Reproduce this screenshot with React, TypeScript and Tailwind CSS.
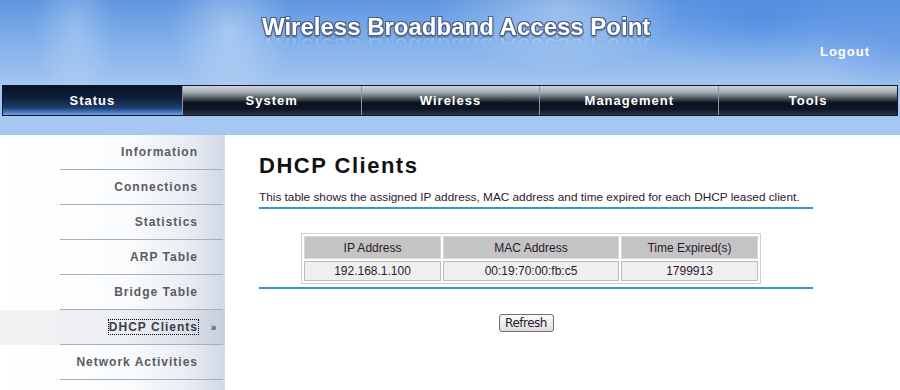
import React from "react";

const navItems = ["Status", "System", "Wireless", "Management", "Tools"];
const sideItems = [
  "Information",
  "Connections",
  "Statistics",
  "ARP Table",
  "Bridge Table",
  "DHCP Clients",
  "Network Activities",
];

export default function App() {
  return (
    <div className="w-[900px] h-[390px] overflow-hidden bg-white font-['Liberation_Sans',Arial,sans-serif]">
      {/* Header */}
      <div className="h-[85px] flex flex-col bg-[radial-gradient(ellipse_40px_80px_at_75px_30px,rgba(255,255,255,0.25),transparent),radial-gradient(ellipse_60px_70px_at_230px_30px,rgba(255,255,255,0.35),transparent),radial-gradient(ellipse_120px_60px_at_560px_10px,rgba(255,255,255,0.35),transparent),radial-gradient(ellipse_90px_60px_at_900px_40px,rgba(60,120,220,0.35),transparent),radial-gradient(ellipse_140px_50px_at_760px_20px,rgba(40,110,220,0.35),transparent),linear-gradient(180deg,#5f97e0_0%,#7eaeea_45%,#a4c6f1_100%)]">
        <div className="pt-[13px] pl-[262px] h-[41px]">
          <span className="block text-[24px] leading-[28px] font-bold text-white [text-shadow:-1px_-1px_0_#4a5f88,1px_-1px_0_#4a5f88,-1px_1px_0_#4a5f88,1px_1px_0_#4a5f88,0_2px_2px_rgba(40,60,100,0.6)] [-webkit-box-reflect:below_-9px_linear-gradient(transparent_55%,rgba(255,255,255,0.35))]">
            Wireless Broadband Access Point
          </span>
        </div>
        <div className="flex justify-end pr-[30px] pt-[3px]">
          <span className="text-[13px] leading-[16px] font-bold text-white tracking-[1px]">
            Logout
          </span>
        </div>
      </div>

      {/* Nav bar */}
      <div className="bg-[#a6c7f1] px-[2px]">
        <div className="h-[31px] grid grid-cols-5 border border-[#0c1729]">
          {navItems.map((n, i) => (
            <div
              key={n}
              className={
                i === 0
                  ? "flex items-center justify-center text-white font-bold text-[13px] tracking-[1px] bg-[linear-gradient(180deg,#081226_0%,#0e1e3a_40%,#1f3c6c_75%,#3f6fb8_88%,#6d9fe8_100%)]"
                  : "flex items-center justify-center text-white font-bold text-[13px] tracking-[1px] border-l border-[#8e949c] bg-[linear-gradient(180deg,#d2d6da_0%,#a4aab2_22%,#4e5660_42%,#0c121c_58%,#0e1626_80%,#2a3648_100%)]"
              }
            >
              {n}
            </div>
          ))}
        </div>
        <div className="h-[19px]" />
      </div>

      {/* Main */}
      <div className="flex">
        {/* Sidebar */}
        <div className="w-[225px] h-[255px] bg-[linear-gradient(90deg,#ffffff_0%,#fbfcfd_55%,#eaeef4_82%,#d2d9e5_100%)]">
          {sideItems.map((s) => {
            const active = s === "DHCP Clients";
            return (
              <div key={s} className={active ? "bg-[rgba(20,30,60,0.06)]" : ""}>
                <div className="h-[34px] flex items-center justify-end">
                  <span
                    className={
                      active
                        ? "text-[12px] leading-[14px] font-bold tracking-[1px] text-[#3c3c44] outline outline-1 outline-dotted outline-black"
                        : "text-[12px] leading-[14px] font-bold tracking-[1px] text-[#5a5a62]"
                    }
                  >
                    {s}
                  </span>
                  <span className="w-[27px] flex justify-center pl-[4px] text-[10px] font-bold text-[#2c4c8c]">
                    {active ? "»" : ""}
                  </span>
                </div>
                <div className="ml-[60px] w-[163px] h-px bg-[#a7aebd]" />
              </div>
            );
          })}
        </div>

        {/* Content */}
        <div className="flex-1 pl-[34px]">
          <div className="w-[554px]">
            <h1 className="mt-[18px] text-[22px] leading-[26px] font-bold tracking-[1.5px] text-[#111]">
              DHCP Clients
            </h1>
            <p className="mt-[12px] text-[11.8px] leading-[13px] text-[#2e1830]">
              This table shows the assigned IP address, MAC address and time expired for each DHCP leased client.
            </p>
            <div className="mt-[3px] h-[2px] bg-[#3497cc]" />

            <div className="pt-[24px] pl-[42px]">
              <table className="w-[460px] border-separate border-spacing-[2px] border border-[#d0d0d0] text-[12px] text-[#2e1830]">
                <thead>
                  <tr>
                    <th className="w-[137px] h-[23px] bg-[#c4c4c4] font-normal border border-[#d8d8d8]">IP Address</th>
                    <th className="h-[23px] bg-[#c4c4c4] font-normal border border-[#d8d8d8]">MAC Address</th>
                    <th className="w-[137px] h-[23px] bg-[#c4c4c4] font-normal border border-[#d8d8d8]">Time Expired(s)</th>
                  </tr>
                </thead>
                <tbody>
                  <tr>
                    <td className="h-[19px] bg-[#efefef] text-center border border-[#bcbcbc]">192.168.1.100</td>
                    <td className="h-[19px] bg-[#efefef] text-center border border-[#bcbcbc]">00:19:70:00:fb:c5</td>
                    <td className="h-[19px] bg-[#efefef] text-center border border-[#bcbcbc]">1799913</td>
                  </tr>
                </tbody>
              </table>
            </div>
            <div className="mt-[3px] h-[2px] bg-[#3497cc]" />

            <div className="flex justify-center pt-[25px] pr-[20px]">
              <button className="w-[55px] h-[18px] rounded-[3px] border border-[#6f6f6f] bg-[linear-gradient(180deg,#fafafa_0%,#ececec_60%,#dcdcdc_100%)] text-[12px] leading-[16px] text-[#2e1830] font-['DejaVu_Sans',sans-serif] tracking-[-0.5px]">
                Refresh
              </button>
            </div>
          </div>
        </div>
      </div>
    </div>
  );
}
